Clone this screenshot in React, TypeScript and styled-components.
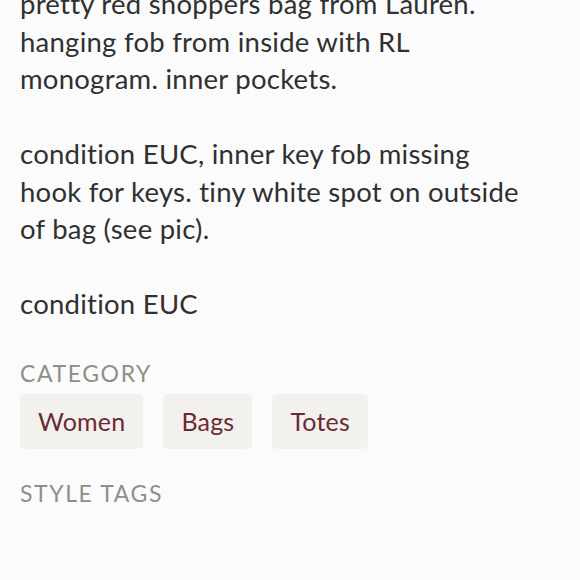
import React from "react";
import styled, { createGlobalStyle } from "styled-components";

const Global = createGlobalStyle`
  html, body { margin: 0; padding: 0; background: #fbfbfb; }
  body { font-family: "Lato", "Noto Sans", sans-serif; -webkit-font-smoothing: antialiased; }
`;

const Page = styled.div`
  width: 580px;
  height: 580px;
  overflow: hidden;
  background: #fbfbfb;
  box-sizing: border-box;
  padding: 0 20px;
`;

const Description = styled.div`
  margin-top: -15px;
  font-size: 27.5px;
  line-height: 37.5px;
  letter-spacing: 0.25px;
  color: #303030;
  white-space: pre;
`;

const SectionLabel = styled.div<{ $gap: number }>`
  margin-top: ${(p) => p.$gap}px;
  font-size: 23px;
  line-height: 28px;
  letter-spacing: 1.6px;
  text-transform: uppercase;
  color: #8f8f89;
`;

const ChipRow = styled.div`
  display: flex;
  gap: 20px;
  margin-top: 7px;
`;

const Chip = styled.div`
  display: flex;
  align-items: center;
  height: 55px;
  padding: 0 18px;
  border-radius: 5px;
  background: #f3f1ed;
  color: #6c2a36;
  font-size: 25px;
  letter-spacing: 0.2px;
`;

const text = `pretty red shoppers bag from Lauren.
hanging fob from inside with RL
monogram. inner pockets.

condition EUC, inner key fob missing
hook for keys. tiny white spot on outside
of bag (see pic).

condition EUC`;

export default function App() {
  return (
    <>
      <Global />
      <Page>
        <Description>{text}</Description>
        <SectionLabel $gap={36}>Category</SectionLabel>
        <ChipRow>
          <Chip>Women</Chip>
          <Chip>Bags</Chip>
          <Chip>Totes</Chip>
        </ChipRow>
        <SectionLabel $gap={30}>Style Tags</SectionLabel>
      </Page>
    </>
  );
}
